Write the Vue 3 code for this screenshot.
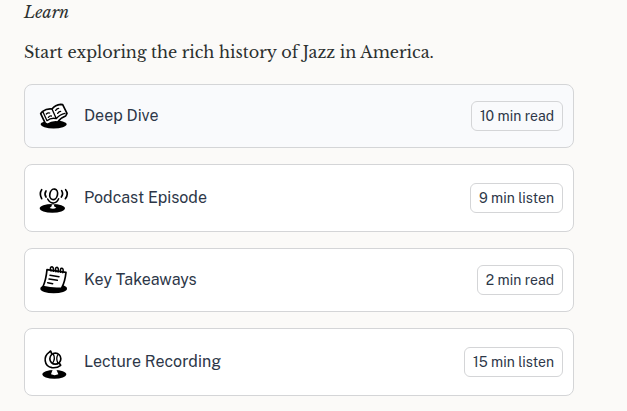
<script setup>
const items = [
  { icon: 'book', title: 'Deep Dive', time: '10 min read', cls: 'active' },
  { icon: 'mic', title: 'Podcast Episode', time: '9 min listen', cls: 'tall' },
  { icon: 'note', title: 'Key Takeaways', time: '2 min read', cls: '' },
  { icon: 'globe', title: 'Lecture Recording', time: '15 min listen', cls: 'tall' },
]
</script>

<template>
  <main class="page">
    <p class="eyebrow">Learn</p>
    <p class="intro">Start exploring the rich history of Jazz in America.</p>
    <div class="list">
      <div v-for="item in items" :key="item.title" class="card" :class="item.cls">
        <svg class="icon" viewBox="0 0 132 120" fill="none" stroke="#000" stroke-width="4.5" stroke-linecap="round" stroke-linejoin="round">
          <g v-if="item.icon === 'book'">
            <ellipse cx="65" cy="85" rx="39" ry="12.5" fill="#000" stroke="none" />
            <path d="M26 53 L32 46 Q44 37 60 39 Q70 26 86 25 L92 26 L105 52 L101 60 Q88 64 77 78 Q60 76 46 85 L40 82 Z" fill="#fff" stroke-width="5" />
            <path d="M33 48 L45 74 Q58 64 73 68 Q83 55 99 52 M60 39 L73 68" stroke-width="4" />
            <path d="M43 54 Q48 49 53 51 M49 64 Q53 59 58 60 M71 43 Q75 37 80 37 M77 52 Q81 46 86 46" stroke-width="4" />
          </g>
          <g v-else-if="item.icon === 'mic'">
            <ellipse cx="61" cy="91" rx="38" ry="13" fill="#000" stroke="none" />
            <path d="M53 90 L59 85 L60 75 L67 75 L66 85 L73 89 Q64 95 53 90 Z" fill="#fff" stroke="none" />
            <ellipse cx="65" cy="49" rx="11.5" ry="16" transform="rotate(12 65 49)" fill="#fff" stroke-width="5" />
            <path d="M47 63 Q53 75 64 75 Q75 74 80 62 M63 75 L63 78" />
            <path d="M42 39 Q36 48 42 57 M29 35 Q21 47 29 62 M89 38 Q95 48 88 57 M101 35 Q111 47 100 62" stroke-width="5" />
          </g>
          <g v-else-if="item.icon === 'note'">
            <ellipse cx="65" cy="86" rx="40" ry="14" fill="#000" stroke="none" />
            <path d="M45 29 L102 37 Q99 65 89 84 Q65 87 33 80 Q42 60 45 29 Z" fill="#fff" stroke-width="5" />
            <path d="M51 57 L76 61 M47 68 L62 71 M54 46 L81 50" />
            <path d="M57 33 Q52 21 60 20 Q66 22 64 34 M72 35 Q68 22 75 22 Q81 24 78 36 M86 37 Q83 24 90 25 Q96 27 92 38" />
          </g>
          <g v-else>
            <ellipse cx="67" cy="97" rx="36" ry="13" fill="#000" stroke="none" />
            <path d="M57 97 L63 80 L72 80 L79 97 Q68 102 57 97 Z" fill="#fff" stroke="none" />
            <circle cx="70" cy="50" r="16.5" fill="#fff" stroke-width="5" />
            <path d="M64 37 Q71 49 62 63 M78 38 Q71 48 77 62" stroke-width="4" />
            <path d="M59 35 L56 27 L51 31 C34 43 35 73 60 77 Q75 79 86 70 L82 64" stroke-width="5" />
          </g>
        </svg>
        <span class="title">{{ item.title }}</span>
        <span class="chip">{{ item.time }}</span>
      </div>
    </div>
  </main>
</template>

<style>
body { background: #fbfaf8; }
</style>
<style scoped>
.page { box-sizing: border-box; width: 598px; height: 411px; padding: 0 24px; overflow: hidden; }
p { margin: 0; color: #2b302f; font-family: "Libre Baskerville", "Liberation Serif", serif; font-size: 16px; white-space: nowrap; }
.eyebrow { height: 32px; line-height: 24px; font-style: italic; }
.intro { height: 52px; line-height: 40px; }
.list { display: flex; flex-direction: column; gap: 16px; }
.card { box-sizing: border-box; display: flex; align-items: center; height: 64px; padding: 0 10px 0 7px; border: 1px solid #d4d5d7; border-radius: 8px; background: #fff; font-family: "Public Sans", Roboto, "Liberation Sans", sans-serif; color: #2d3748; }
.tall { height: 68px; }
.active { background: #f9fafc; }
.icon { width: 44px; height: 40px; flex: none; }
.title { flex: 1; margin-left: 8px; font-size: 16px; line-height: 24px; white-space: nowrap; }
.chip { padding: 0 8px; border: 1px solid #d4d5d7; border-radius: 6px; font-size: 14px; line-height: 28px; white-space: nowrap; }
</style>
